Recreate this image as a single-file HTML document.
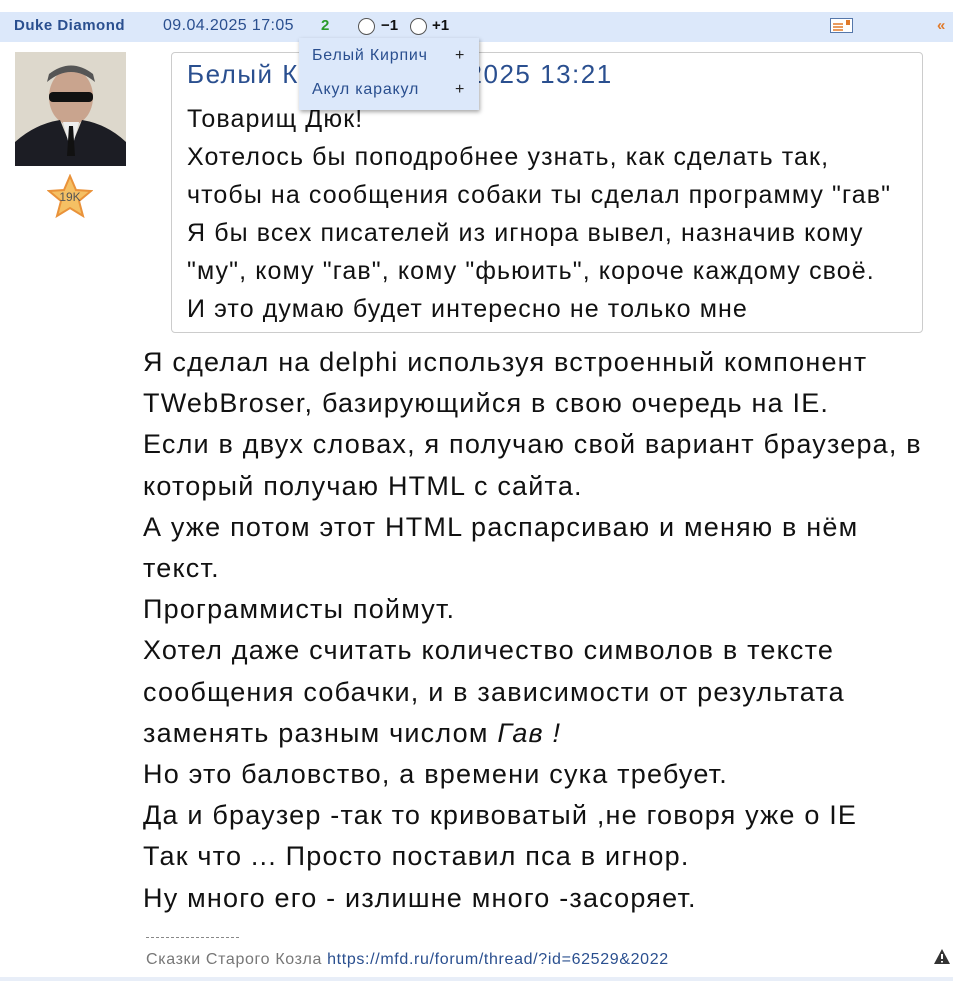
<!DOCTYPE html>
<html><head><meta charset="utf-8"><style>
body{margin:0;width:953px;height:981px;background:#fff;font-family:"Liberation Sans",sans-serif;position:relative;overflow:hidden}
.bar{position:absolute;left:0;top:12px;width:953px;height:30px;background:#dce8fa}
.a{position:absolute;font-size:15px;top:17px}
.q{position:absolute;left:171px;top:52px;width:750px;height:279px;border:1px solid #ccc;border-radius:4px}
.qt{position:absolute;left:187px;top:100px;font-size:25px;line-height:38px;color:#111;white-space:nowrap;letter-spacing:1.1px}
.mt{position:absolute;left:143px;top:342px;font-size:27px;line-height:41.2px;color:#111;white-space:nowrap;letter-spacing:1.2px}
.menu{position:absolute;left:299px;top:38px;width:180px;height:72px;background:#dce8fa;box-shadow:1px 2px 4px rgba(0,0,0,.35);font-size:16px;color:#2a4f8f;letter-spacing:0.8px}
.menu div{position:absolute;left:13px}
.menu span{position:absolute;left:156px;color:#222}
</style></head><body>
<div class="bar"></div>
<div class="a" style="left:14px;color:#2a4f8f;font-weight:bold;letter-spacing:0.5px">Duke Diamond</div>
<div class="a" style="left:163px;color:#2a4f8f;font-size:16px;letter-spacing:0.4px">09.04.2025 17:05</div>
<div class="a" style="left:321px;color:#2a9a2a;font-weight:bold">2</div>
<div style="position:absolute;left:358px;top:18px;width:15px;height:15px;border:1px solid #555;border-radius:50%;background:#fff"></div>
<div class="a" style="left:381px;font-weight:bold;color:#111">−1</div>
<div style="position:absolute;left:410px;top:18px;width:15px;height:15px;border:1px solid #555;border-radius:50%;background:#fff"></div>
<div class="a" style="left:432px;font-weight:bold;color:#111">+1</div>
<svg style="position:absolute;left:830px;top:18px" width="23" height="15"><rect x=".5" y=".5" width="22" height="14" fill="#fff" stroke="#5577aa"/><rect x="16" y="2" width="4" height="5" fill="#e07a2a"/><path d="M3 6h10M3 9h10M3 12h10" stroke="#e07a2a" stroke-width="1.5"/></svg>
<div class="a" style="left:937px;color:#e07a2a;font-weight:bold">«</div>
<svg style="position:absolute;left:15px;top:52px" width="111" height="114"><rect width="111" height="114" fill="#ddd8cc"/><ellipse cx="56" cy="45" rx="22" ry="28" fill="#c9a48e"/><path d="M32 30 Q56 10 80 30 L78 22 Q56 5 34 22Z" fill="#555"/><rect x="34" y="40" width="44" height="10" rx="4" fill="#111"/><path d="M0 114 L0 90 Q20 72 45 68 L56 95 L67 68 Q92 72 111 90 L111 114Z" fill="#1c1d24"/><path d="M48 70 L56 100 L64 70Z" fill="#eee"/><path d="M54 74h4l2 30h-8Z" fill="#111"/></svg>
<svg style="position:absolute;left:47px;top:174px" width="46" height="46"><path d="M23 2 L29 16 L44 17 L32 27 L36 42 L23 34 L10 42 L14 27 L2 17 L17 16Z" fill="#f5c064" stroke="#e9923a" stroke-width="2"/><text x="23" y="27" font-size="12" text-anchor="middle" fill="#555" font-family="Liberation Sans">19K</text></svg>
<div class="q"></div>
<div style="position:absolute;left:187px;top:59px;font-size:26px;color:#2a4f8f;letter-spacing:1.5px">Белый Кирпич 08.04.2025 13:21</div>
<div class="qt">Товарищ Дюк!<br>Хотелось бы поподробнее узнать, как сделать так,<br>чтобы на сообщения собаки ты сделал программу "гав"<br>Я бы всех писателей из игнора вывел, назначив кому<br>"му", кому "гав", кому "фьюить", короче каждому своё.<br>И это думаю будет интересно не только мне</div>
<div class="menu"><div style="top:9px">Белый Кирпич</div><span style="top:9px">+</span><div style="top:43px">Акул каракул</div><span style="top:43px">+</span></div>
<div class="mt">Я сделал на delphi используя встроенный компонент<br>TWebBroser, базирующийся в свою очередь на IE.<br>Если в двух словах, я получаю свой вариант браузера, в<br>который получаю HTML с сайта.<br>А уже потом этот HTML распарсиваю и меняю в нём<br>текст.<br>Программисты поймут.<br>Хотел даже считать количество символов в тексте<br>сообщения собачки, и в зависимости от результата<br>заменять разным числом <i>Гав !</i><br>Но это баловство, а времени сука требует.<br>Да и браузер -так то кривоватый ,не говоря уже о IE<br>Так что ... Просто поставил пса в игнор.<br>Ну много его - излишне много -засоряет.</div>
<div style="position:absolute;left:146px;top:937px;width:93px;border-top:1px dashed #888"></div>
<div style="position:absolute;left:146px;top:951px;font-size:16px;color:#777;letter-spacing:0.65px;white-space:nowrap">Сказки Старого Козла <span style="color:#2a4f8f">https://mfd.ru/forum/thread/?id=62529&amp;2022</span></div>
<svg style="position:absolute;left:933px;top:948px" width="18" height="17"><path d="M9 1 L17 16 H1Z" fill="#333"/><path d="M9 6v5M9 13v1.5" stroke="#fff" stroke-width="2"/></svg>
<div style="position:absolute;left:0;top:977px;width:953px;height:4px;background:#e8eef8"></div>
</body></html>
